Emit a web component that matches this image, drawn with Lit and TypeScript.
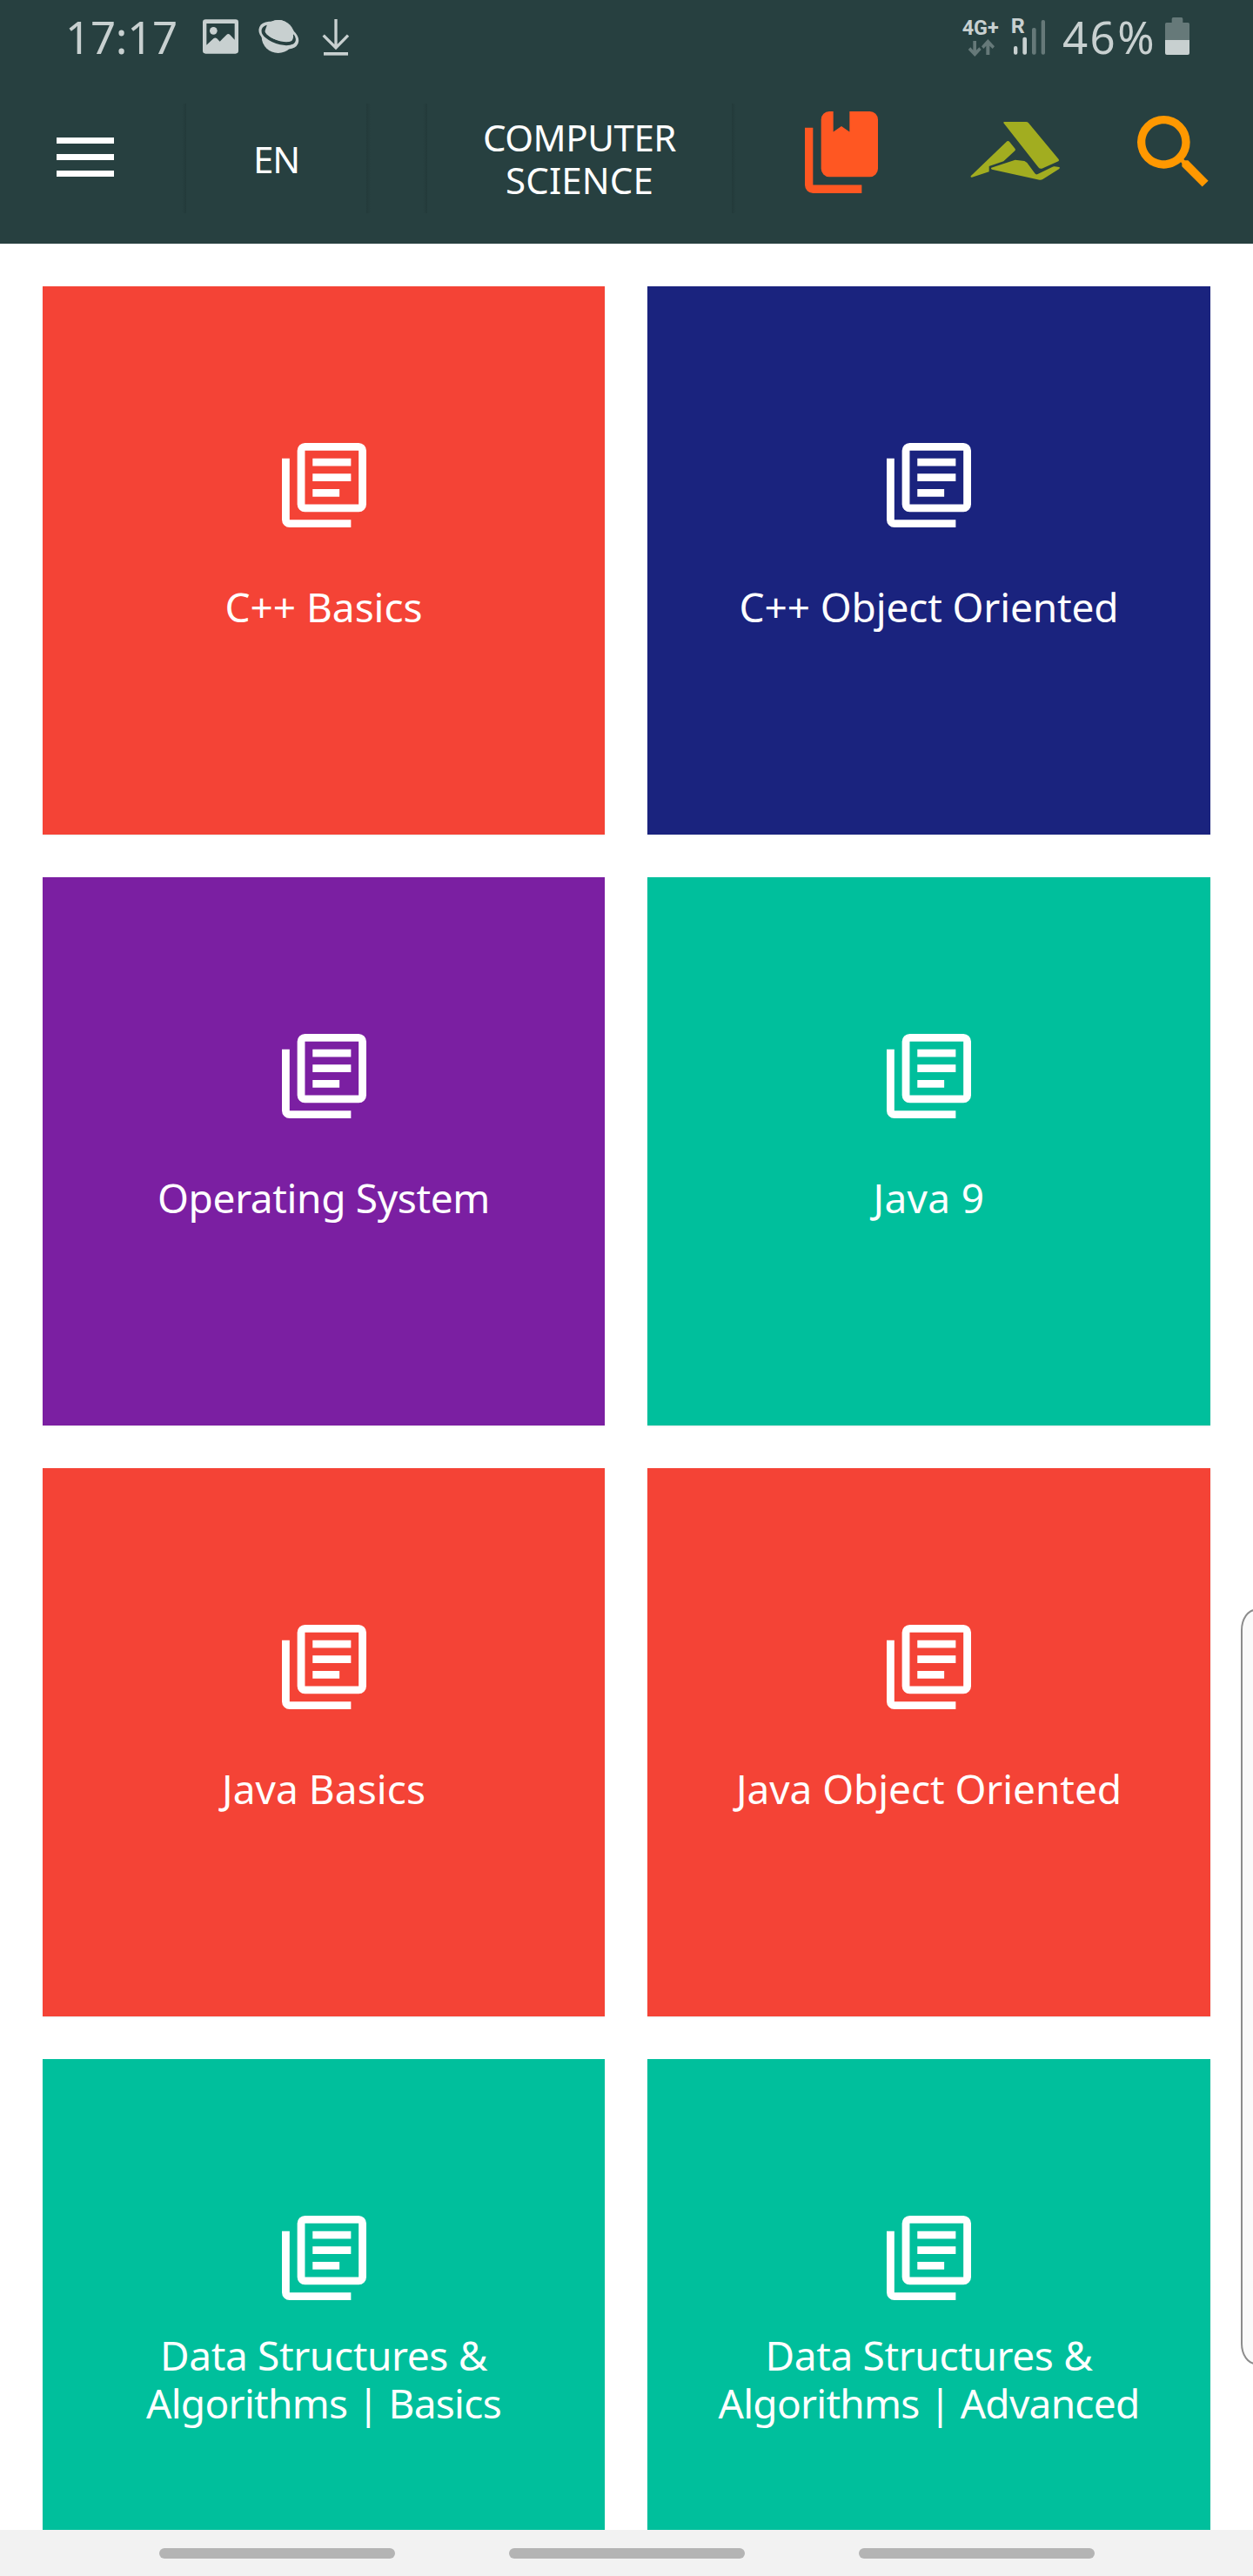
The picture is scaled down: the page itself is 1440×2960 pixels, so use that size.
import { LitElement, html, css } from "lit";
import { customElement, property } from "lit/decorators.js";

interface Line {
  text: string;
  width: number;
}

interface Course {
  tone: string;
  lines: Line[];
}

const COURSES: Course[] = [
  { tone: "red", lines: [{ text: "C++ Basics", width: 227 }] },
  { tone: "indigo", lines: [{ text: "C++ Object Oriented", width: 436 }] },
  { tone: "purple", lines: [{ text: "Operating System", width: 382 }] },
  { tone: "teal", lines: [{ text: "Java 9", width: 128 }] },
  { tone: "red", lines: [{ text: "Java Basics", width: 234 }] },
  { tone: "red", lines: [{ text: "Java Object Oriented", width: 443 }] },
  {
    tone: "teal",
    lines: [
      { text: "Data Structures &", width: 376 },
      { text: "Algorithms | Basics", width: 408 },
    ],
  },
  {
    tone: "teal",
    lines: [
      { text: "Data Structures &", width: 376 },
      { text: "Algorithms | Advanced", width: 484 },
    ],
  },
];

/** One line of text whose tracking is adjusted to fill a given width. */
@customElement("fit-text")
export class FitText extends LitElement {
  @property() text = "";
  @property({ type: Number }) width = 0;

  static styles = css`
    :host {
      display: block;
      white-space: pre;
    }
    .line {
      display: inline-block;
    }
  `;

  async updated() {
    await document.fonts.ready;
    const line = this.renderRoot.querySelector(".line") as HTMLElement;
    line.style.letterSpacing = "0px";
    const natural = line.getBoundingClientRect().width;
    const tracking = (this.width - natural) / this.text.length;
    line.style.letterSpacing = `${tracking.toFixed(3)}px`;
  }

  render() {
    return html`<span class="line">${this.text}</span>`;
  }
}

@customElement("course-tile")
export class CourseTile extends LitElement {
  @property({ attribute: false }) lines: Line[] = [];

  static styles = css`
    :host {
      display: flex;
      flex-direction: column;
      align-items: center;
      box-sizing: border-box;
      height: 630px;
      padding-top: 180px;
      color: #fff;
      box-shadow: 0 1px 2px rgba(0, 0, 0, 0.08);
    }
    .icon {
      display: block;
      width: 97px;
      height: 97px;
      flex: none;
    }
    .title {
      display: flex;
      flex-direction: column;
      justify-content: center;
      align-items: center;
      height: 110px;
      margin-top: 36px;
      font-size: 46px;
      line-height: 55px;
    }
  `;

  render() {
    return html`
      <svg class="icon" viewBox="0 0 22 22" fill="#fff">
        <path d="M0 4h2v16h16v2H2a2 2 0 0 1-2-2z" />
        <path
          fill-rule="evenodd"
          d="M6 0h14a2 2 0 0 1 2 2v14a2 2 0 0 1-2 2H6a2 2 0 0 1-2-2V2a2 2 0 0 1 2-2zM6 2v14h14V2z"
        />
        <path d="M8 4h10v2H8zM8 8h10v2H8zM8 12h7v2H8z" />
      </svg>
      <div class="title">
        ${this.lines.map((l) => html`<fit-text .text=${l.text} .width=${l.width}></fit-text>`)}
      </div>
    `;
  }
}

@customElement("status-bar")
export class StatusBar extends LitElement {
  static styles = css`
    :host {
      display: flex;
      align-items: center;
      height: 84px;
      box-sizing: border-box;
      padding: 0 56px 0 75px;
      color: #c8d0d0;
      font-size: 51px;
      line-height: 84px;
    }
    .clock {
      width: 150px;
    }
    svg {
      display: block;
      flex: none;
    }
    .notices {
      width: 190px;
      height: 64px;
    }
    .network {
      width: 126px;
      height: 64px;
      margin-left: auto;
    }
    .level {
      width: 116px;
    }
    .battery {
      width: 47px;
      height: 64px;
    }
    .small {
      font-family: Roboto, "Noto Sans", sans-serif;
      font-weight: 700;
    }
  `;

  render() {
    return html`
      <div class="clock"><fit-text text="17:17" width="129"></fit-text></div>
      <svg class="notices" viewBox="0 0 570 192" fill="#c8d0d0">
        <path
          fill-rule="evenodd"
          d="M34 37h103a10 10 0 0 1 10 10v98a10 10 0 0 1-10 10H34a10 10 0 0 1-10-10V47a10 10 0 0 1 10-10zM37 51v74l24-22q6-5 12 0l10 10 23-23q6-6 12 0l16 17V51z"
        />
        <circle cx="61" cy="76" r="13" />
        <circle cx="284" cy="96" r="57" />
        <ellipse cx="286" cy="92" rx="66" ry="35" transform="rotate(23 286 92)" fill="none" stroke="#c8d0d0" stroke-width="13" />
        <path d="M246 62C228 68 228 82 246 97C271 118 314 126 333 116C342 111 339 100 333 92" fill="none" stroke="#274040" stroke-width="12" />
        <path d="M240 80C239 54 262 39 286 39C313 39 331 61 335 87C339 106 332 113 316 112C285 112 250 101 240 80z" />
        <path d="M483 36v99M440 92l43 43 42-43" fill="none" stroke="#c8d0d0" stroke-width="10" />
        <path d="M441 150h84v11h-84z" />
      </svg>
      <svg class="network" viewBox="0 0 378 192" fill="#c8d0d0">
        <text class="small" x="32" y="90" font-size="69" textLength="126" lengthAdjust="spacingAndGlyphs">4G+</text>
        <text class="small" x="200" y="84" font-size="73" textLength="48" lengthAdjust="spacingAndGlyphs">R</text>
        <path fill="#667979" d="M70 111h11v32l10-10 7 8-22 24-23-24 8-8 9 10zM115 159h12v-31l10 10 7-8-23-25-22 25 7 8 9-10z" />
        <rect x="210" y="129" width="13" height="29" rx="6" />
        <rect x="241" y="98" width="14" height="60" rx="6" />
        <rect x="273" y="66" width="14" height="92" rx="6" fill="#667979" />
        <rect x="305" y="39" width="13" height="119" rx="6" fill="#667979" />
      </svg>
      <div class="level"><fit-text text="46%" width="108"></fit-text></div>
      <svg class="battery" viewBox="0 0 141 192">
        <path fill="#667979" d="M6 108V53q0-5 5-5h18V35q0-5 5-5h28q5 0 5 5v13h18q5 0 5 5v55z" />
        <path fill="#c8d0d0" d="M6 108h84v45q0 6-6 6H12q-6 0-6-6z" />
      </svg>
    `;
  }
}

@customElement("tool-bar")
export class ToolBar extends LitElement {
  static styles = css`
    :host {
      display: flex;
      align-items: center;
      height: 196px;
      box-sizing: border-box;
      padding: 35px 0 35px 65px;
      color: #fff;
      font-size: 42px;
      line-height: 49px;
    }
    svg {
      display: block;
      flex: none;
    }
    .menu {
      display: flex;
      flex-direction: column;
      gap: 12px;
      width: 66px;
      margin-bottom: 3px;
    }
    .bar {
      height: 7px;
      background: #fff;
    }
    .choice {
      display: flex;
      align-items: stretch;
      height: 126px;
    }
    .choice::before,
    .choice::after {
      content: "";
      width: 5px;
      background: linear-gradient(to left, #233a3a, #274040);
    }
    .choice::after {
      background: linear-gradient(to right, #233a3a, #274040);
    }
    .caption {
      display: flex;
      flex-direction: column;
      align-items: center;
      justify-content: center;
    }
    .language {
      margin-left: 78px;
    }
    .language .caption {
      width: 207px;
    }
    .subject {
      margin-left: 60px;
    }
    .subject .caption {
      width: 350px;
    }
    .library {
      width: 84px;
      height: 94px;
      margin: 0 0 14px 79px;
    }
    .brand {
      width: 150px;
      height: 100px;
      margin: 0 0 24px 81px;
    }
    .search {
      width: 112px;
      height: 112px;
      margin: 0 0 14px 53px;
    }
  `;

  render() {
    return html`
      <div class="menu">
        <div class="bar"></div>
        <div class="bar"></div>
        <div class="bar"></div>
      </div>
      <div class="choice language">
        <div class="caption"><fit-text text="EN" width="53"></fit-text></div>
      </div>
      <div class="choice subject">
        <div class="caption">
          <fit-text text="COMPUTER" width="222"></fit-text>
          <fit-text text="SCIENCE" width="170"></fit-text>
        </div>
      </div>
      <svg class="library" viewBox="0 0 18 20" preserveAspectRatio="none" fill="#ff5722">
        <path d="M0 4h2v14h12v2H2a2 2 0 0 1-2-2z" />
        <path d="M6 0h1v5l2-1.4L11 5V0h5a2 2 0 0 1 2 2v12a2 2 0 0 1-2 2H6a2 2 0 0 1-2-2V2a2 2 0 0 1 2-2z" />
      </svg>
      <svg class="brand" viewBox="0 0 450 300" fill="#a2ad20">
        <path d="M193 60h74q6 0 9 4l104 125q3 4-1 7l-57 25q-7 2-12-4L190 64q-1-4 3-4z" />
        <path d="M202 127q5-3 8 1l20 25q2 4-1 7l-39 36-50 17v19l-59 19q-6 1-4-4z" />
        <path d="M148 218l82-27 32 4 9 6 27 37q4 5 10 2l51-25q3-2 7-1l16 2q4 2 0 6l-57 36q-5 3-11 2l-164-36q-6-3-2-6z" />
      </svg>
      <svg class="search" viewBox="0 0 24 24" fill="#ff9800">
        <path
          d="M15.5 14h-.79l-.28-.27A6.471 6.471 0 0 0 16 9.5 6.5 6.5 0 1 0 9.5 16c1.61 0 3.09-.59 4.23-1.57l.27.28v.79l5 4.99L20.49 19l-4.99-5zm-6 0C7.01 14 5 11.99 5 9.5S7.01 5 9.5 5 14 7.01 14 9.5 11.99 14 9.5 14z"
        />
      </svg>
    `;
  }
}

@customElement("app-root")
export class AppRoot extends LitElement {
  static styles = css`
    :host {
      display: flex;
      flex-direction: column;
      position: relative;
      width: 1440px;
      height: 2960px;
      overflow: hidden;
      background: #fff;
      font-family: "Noto Sans", "Open Sans", sans-serif;
    }
    .header {
      flex: none;
      height: 280px;
      background: #274040;
    }
    .courses {
      flex: 1;
      min-height: 0;
      overflow: hidden;
      display: grid;
      grid-template-columns: 646px 647px;
      grid-auto-rows: 630px;
      gap: 49px;
      align-content: start;
      padding: 49px 49px 0;
    }
    .red {
      background: #f44336;
    }
    .indigo {
      background: #1a237e;
    }
    .purple {
      background: #7b1fa2;
    }
    .teal {
      background: #00bf9c;
    }
    .navigation {
      flex: none;
      display: flex;
      justify-content: center;
      gap: 131px;
      box-sizing: border-box;
      height: 53px;
      padding-top: 21px;
      background: #f2f2f2;
    }
    .pill {
      width: 271px;
      height: 12px;
      border-radius: 6px;
      background: #b4b4b4;
    }
    .edge {
      position: absolute;
      top: 1849px;
      right: -26px;
      box-sizing: border-box;
      width: 40px;
      height: 868px;
      border: 2px solid #8c8c8c;
      border-radius: 17px / 24px;
      background: #fafafa;
    }
  `;

  render() {
    return html`
      <div class="header">
        <status-bar></status-bar>
        <tool-bar></tool-bar>
      </div>
      <div class="courses">
        ${COURSES.map((c) => html`<course-tile class=${c.tone} .lines=${c.lines}></course-tile>`)}
      </div>
      <div class="navigation">
        <div class="pill"></div>
        <div class="pill"></div>
        <div class="pill"></div>
      </div>
      <div class="edge"></div>
    `;
  }
}
